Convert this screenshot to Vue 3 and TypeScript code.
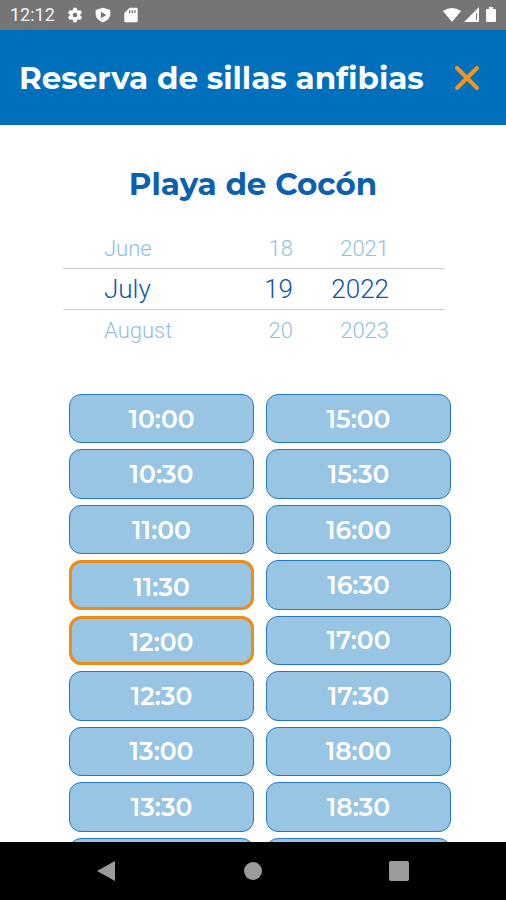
<script setup lang="ts">
import { computed, ref } from 'vue'

const months = [
  'January', 'February', 'March', 'April', 'May', 'June',
  'July', 'August', 'September', 'October', 'November', 'December',
]
const month = ref(6)
const day = ref(19)
const year = ref(2022)

const wrap = (value: number, size: number): number => ((value % size) + size) % size

const wheelRows = computed(() =>
  [-1, 0, 1].map((step) => ({
    step,
    month: months[wrap(month.value + step, 12)],
    day: wrap(day.value - 1 + step, 31) + 1,
    year: year.value + step,
  })),
)

function moveMonth(step: number): void {
  month.value = wrap(month.value + step, 12)
}
function moveDay(step: number): void {
  day.value = wrap(day.value - 1 + step, 31) + 1
}
function moveYear(step: number): void {
  year.value += step
}

const slots = [
  '10:00', '15:00', '10:30', '15:30', '11:00', '16:00',
  '11:30', '16:30', '12:00', '17:00', '12:30', '17:30',
  '13:00', '18:00', '13:30', '18:30', '14:00', '19:00',
]
const selected = ref<string[]>(['11:30', '12:00'])

function toggle(slot: string): void {
  selected.value = selected.value.includes(slot)
    ? selected.value.filter((s) => s !== slot)
    : [...selected.value, slot]
}
</script>

<template>
  <div class="screen">
    <div class="status">
      <span class="clock">12:12</span>
      <svg class="status-icon" viewBox="0 0 24 24" aria-hidden="true">
        <path d="M20 13.200a8 8 0 0 0 0-2.400l2.500-1.900-2.600-4.500-2.900 1.200a8 8 0 0 0-2-1.200L14.600 1H9.400L9 4.400a8 8 0 0 0-2 1.200L4.100 4.400 1.500 8.900 4 10.800a8 8 0 0 0 0 2.400l-2.500 1.900 2.600 4.500L7 18.400a8 8 0 0 0 2 1.200l.4 3.400h5.200l.4-3.400a8 8 0 0 0 2-1.200l2.900 1.200 2.600-4.500zM12 15.500a3.500 3.500 0 1 1 0-7 3.500 3.500 0 0 1 0 7z" />
      </svg>
      <svg class="status-icon" viewBox="0 0 24 24" aria-hidden="true">
        <path fill-rule="evenodd" d="M12 1 1 4.500V11c0 5.500 5 10 11 12 6-2 11-6.500 11-12V4.500zM9 7l8 5-8 5z" />
      </svg>
      <svg class="status-icon" viewBox="0 0 24 24" aria-hidden="true">
        <path fill-rule="evenodd" d="M10 1h10a2 2 0 0 1 2 2v18a2 2 0 0 1-2 2H4a2 2 0 0 1-2-2V9zM9 5v4h2V5zm4 0v4h2V5zm4 0v4h2V5z" />
      </svg>
      <svg class="signals" viewBox="0 0 56 18" aria-hidden="true">
        <path d="M1 5Q10-1 19 5L10 16z" />
        <path fill-rule="evenodd" d="M37 1v15H22zM34 7v7h1V7z" />
        <path d="M47 1h4v2h2a1 1 0 0 1 1 1v11a1 1 0 0 1-1 1h-8a1 1 0 0 1-1-1V4a1 1 0 0 1 1-1h2z" />
      </svg>
    </div>

    <header class="bar">
      <h1 class="title">Reserva de sillas anfibias</h1>
      <button class="close" type="button" aria-label="Cerrar">
        <svg class="close-icon" viewBox="0 0 24 24" aria-hidden="true">
          <path d="M2 2 22 22M22 2 2 22" />
        </svg>
      </button>
    </header>

    <main class="content">
      <h2 class="place">Playa de Cocón</h2>

      <div class="wheel">
        <div
          v-for="row in wheelRows"
          :key="row.step"
          class="wheel-row"
          :class="{ current: row.step === 0 }"
        >
          <button class="wheel-item month" type="button" @click="moveMonth(row.step)">{{ row.month }}</button>
          <button class="wheel-item" type="button" @click="moveDay(row.step)">{{ row.day }}</button>
          <button class="wheel-item" type="button" @click="moveYear(row.step)">{{ row.year }}</button>
        </div>
      </div>

      <div class="slots">
        <button
          v-for="slot in slots"
          :key="slot"
          type="button"
          class="slot"
          :class="{ selected: selected.includes(slot) }"
          :aria-pressed="selected.includes(slot)"
          @click="toggle(slot)"
        >
          {{ slot }}
        </button>
      </div>
    </main>

    <nav class="system">
      <button class="system-button" type="button" aria-label="Atrás">
        <svg class="system-icon" viewBox="0 0 20 22" aria-hidden="true"><path d="M18 1v20L0 11z" /></svg>
      </button>
      <button class="system-button" type="button" aria-label="Inicio">
        <svg class="system-icon" viewBox="0 0 20 22" aria-hidden="true"><circle cx="10" cy="11" r="9" /></svg>
      </button>
      <button class="system-button" type="button" aria-label="Recientes">
        <svg class="system-icon" viewBox="0 0 20 22" aria-hidden="true"><rect y="1" width="20" height="20" rx="2" /></svg>
      </button>
    </nav>
  </div>
</template>

<style>
body {
  margin: 0;
  background: #fff;
}
</style>

<style scoped>
.screen {
  display: flex;
  flex-direction: column;
  height: 100vh;
  overflow: hidden;
  background: #fff;
  font-family: Montserrat, Inter, sans-serif;
}

button {
  margin: 0;
  padding: 0;
  border: 0;
  background: none;
  font: inherit;
  color: inherit;
  cursor: pointer;
}

.status {
  display: flex;
  flex: none;
  align-items: center;
  gap: 12px;
  height: 30px;
  padding: 0 8px 0 10px;
  background: #757575;
  color: #f4f4f4;
  font-family: Roboto, sans-serif;
  font-size: 18px;
}

.clock {
  line-height: 30px;
}

.status-icon {
  width: 16px;
  height: 16px;
  fill: #fff;
}

.signals {
  width: 56px;
  height: 18px;
  margin-left: auto;
  fill: #fff;
}

.bar {
  display: flex;
  flex: none;
  align-items: center;
  justify-content: space-between;
  height: 95px;
  padding: 0 27px 0 19px;
  background: #0070bd;
  color: #fff;
}

.title {
  margin: 0;
  font-size: 31px;
  font-weight: 700;
  line-height: 38px;
  white-space: nowrap;
}

.close {
  display: flex;
}

.close-icon {
  width: 24px;
  height: 24px;
  fill: none;
  stroke: #f39419;
  stroke-width: 4;
  stroke-linecap: round;
}

.content {
  flex: 1;
  min-height: 0;
  padding: 39px 55px 0 69px;
  overflow-y: auto;
  scrollbar-width: none;
}

.place {
  margin: 0 14px 24px 0;
  color: #0b60b0;
  font-size: 31px;
  font-weight: 700;
  line-height: 40px;
  text-align: center;
}

.wheel {
  margin: 0 6px 44px -6px;
}

.wheel-row {
  display: grid;
  grid-template-columns: 1fr auto 96px;
  height: 40px;
  padding: 0 56px 0 41px;
  color: #91c1e0;
  font-family: Roboto, sans-serif;
  font-size: 22px;
  font-weight: 300;
}

.wheel-item {
  text-align: right;
}

.month {
  text-align: left;
}

.wheel-row.current {
  border-top: 1px solid #cfcfcf;
  border-bottom: 1px solid #cfcfcf;
  color: #0b55a8;
  font-size: 26px;
}

.slots {
  display: grid;
  grid-template-columns: 1fr 1fr;
  grid-auto-rows: 1fr;
  gap: 6px 12px;
  min-height: 493px;
}

.slot {
  border: 1px solid #2478c2;
  border-radius: 12px;
  background: #97c5e3;
  color: #fff;
  font-size: 25px;
  font-weight: 600;
  line-height: 30px;
}

.slot.selected {
  padding-top: 3px;
  border: 3px solid #ed8c17;
}

.system {
  display: flex;
  flex: none;
  align-items: center;
  justify-content: center;
  height: 58px;
  background: #000;
}

.system-button {
  display: flex;
  flex: 0 1 146px;
  justify-content: center;
}

.system-icon {
  width: 20px;
  height: 22px;
  fill: #9b9b9b;
}
</style>
